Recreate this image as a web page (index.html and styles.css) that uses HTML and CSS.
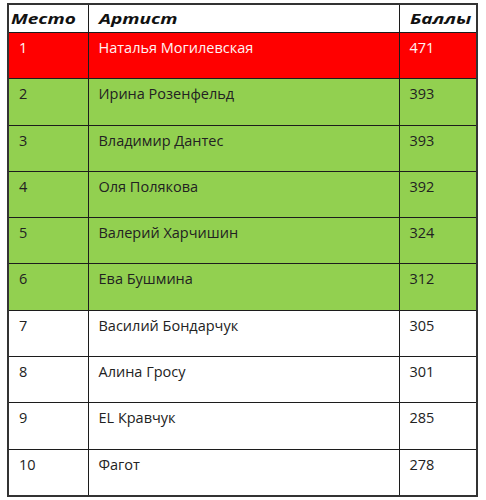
FILE: index.html
```html
<!DOCTYPE html>
<html lang="ru">
<head>
<meta charset="utf-8">
<link rel="stylesheet" href="styles.css">
</head>
<body>
<table class="rating">
  <colgroup>
    <col class="c-place">
    <col class="c-artist">
    <col class="c-score">
  </colgroup>
  <thead>
    <tr><th><span class="hd">Место</span></th><th><span class="hd">Артист</span></th><th><span class="hd">Баллы</span></th></tr>
  </thead>
  <tbody>
    <tr class="first"><td>1</td><td>Наталья Могилевская</td><td>471</td></tr>
    <tr class="top"><td>2</td><td>Ирина Розенфельд</td><td>393</td></tr>
    <tr class="top"><td>3</td><td>Владимир Дантес</td><td>393</td></tr>
    <tr class="top"><td>4</td><td>Оля Полякова</td><td>392</td></tr>
    <tr class="top"><td>5</td><td>Валерий Харчишин</td><td>324</td></tr>
    <tr class="top"><td>6</td><td>Ева Бушмина</td><td>312</td></tr>
    <tr><td>7</td><td>Василий Бондарчук</td><td>305</td></tr>
    <tr><td>8</td><td>Алина Гросу</td><td>301</td></tr>
    <tr><td>9</td><td>EL Кравчук</td><td>285</td></tr>
    <tr><td>10</td><td>Фагот</td><td>278</td></tr>
  </tbody>
</table>
</body>
</html>
```
FILE: styles.css
```css
html, body {
  margin: 0;
  padding: 0;
  background: #ffffff;
}
body {
  padding: 3px 0 0 7px;
  font-family: "Open Sans", "Liberation Sans", sans-serif;
}
.rating {
  border-collapse: collapse;
  table-layout: fixed;
  width: 469px;
  border: 2px solid #333;
}
.c-place { width: 80px; }
.c-artist { width: 311px; }
.c-score { width: 78px; }
.rating th, .rating td {
  border: 1px solid #1c1c1c;
  text-align: left;
  vertical-align: top;
  padding: 0 0 0 10px;
}
.rating th {
  height: 27px;
  font-size: 14px;
  line-height: 16px;
  font-weight: 700;
  font-style: italic;
  color: #111;
  vertical-align: middle;
  padding-left: 2px;
  padding-top: 0;
}
.rating th + th { padding-left: 10px; }
.hd {
  display: inline-block;
  transform: scaleX(1.36);
  transform-origin: left center;
}
.rating td {
  height: 39.3px;
  font-size: 14.5px;
  color: #222;
  padding-top: 6px;
  line-height: 18px;
}
.rating tr.first td {
  background: #ff0000;
  color: #fff3f3;
}
.rating tr.top td {
  background: #92d050;
}
```
